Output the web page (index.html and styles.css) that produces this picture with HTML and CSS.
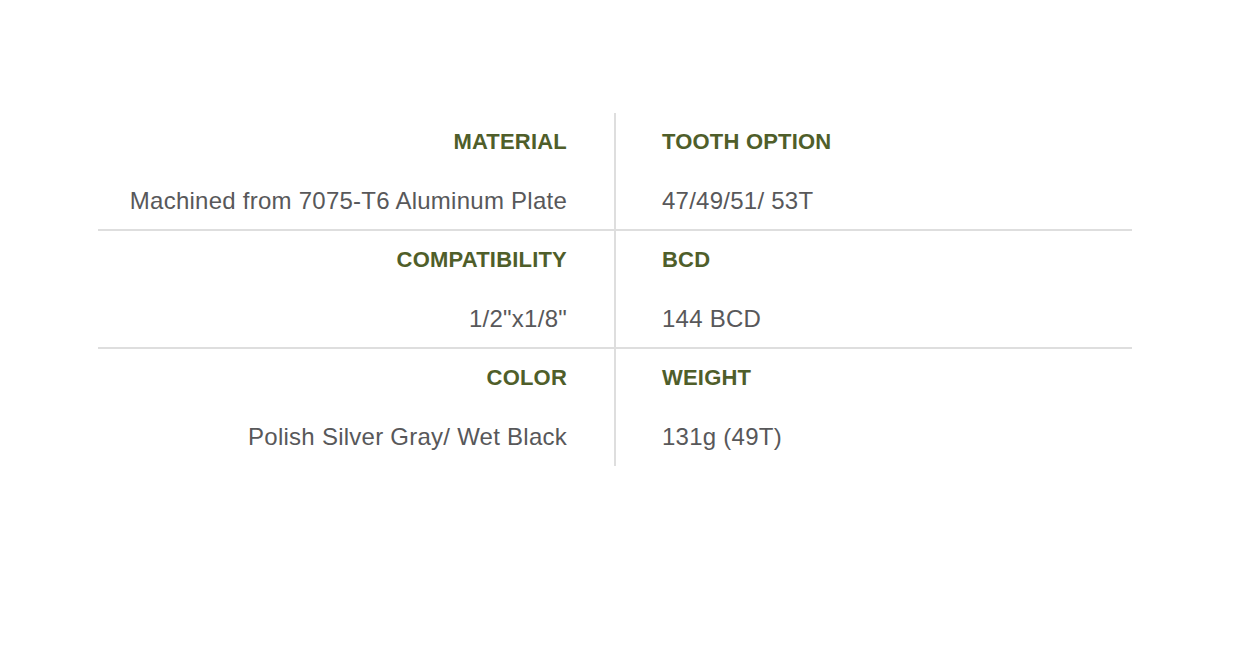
FILE: index.html
```html
<!DOCTYPE html>
<html>
<head>
<meta charset="utf-8">
<link rel="stylesheet" href="styles.css">
</head>
<body>
<div class="specs">
  <div class="cell left"><div class="label">MATERIAL</div><div class="value">Machined from 7075-T6 Aluminum Plate</div></div>
  <div class="cell right"><div class="label">TOOTH OPTION</div><div class="value">47/49/51/ 53T</div></div>
  <div class="cell left"><div class="label">COMPATIBILITY</div><div class="value">1/2"x1/8"</div></div>
  <div class="cell right"><div class="label">BCD</div><div class="value">144 BCD</div></div>
  <div class="cell left last"><div class="label">COLOR</div><div class="value">Polish Silver Gray/ Wet Black</div></div>
  <div class="cell right last"><div class="label">WEIGHT</div><div class="value">131g (49T)</div></div>
</div>
</body>
</html>
```
FILE: styles.css
```css
html, body {
  margin: 0;
  padding: 0;
  background: #fff;
}
body {
  font-family: "Liberation Sans", Arial, sans-serif;
}
.specs {
  display: grid;
  grid-template-columns: 518px 516px;
  width: 1034px;
  margin: 113px 0 0 98px;
}
.cell {
  height: 116px;
  border-bottom: 2px solid #dedede;
}
.cell.last {
  border-bottom: none;
  height: 117px;
}
.left {
  border-right: 2px solid #dedede;
  text-align: right;
  padding-right: 47px;
}
.right {
  padding-left: 46px;
}
.label {
  padding-top: 13px;
  font-size: 22px;
  line-height: 32px;
  font-weight: bold;
  color: #4f5e2a;
  letter-spacing: 0.2px;
}
.value {
  margin-top: 27px;
  font-size: 24px;
  line-height: 32px;
  color: #58585a;
  letter-spacing: 0.25px;
}
```
